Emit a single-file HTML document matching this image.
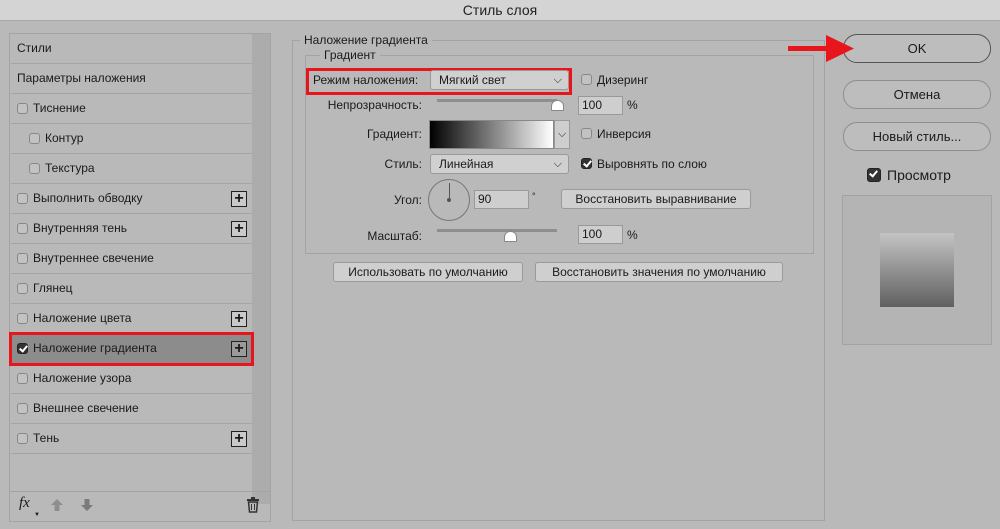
<!DOCTYPE html>
<html><head><meta charset="utf-8"><style>
*{box-sizing:border-box;margin:0;padding:0}
body{width:1000px;height:529px;background:#b9b9b9;font-family:"Liberation Sans",sans-serif;font-size:12px;color:#1a1a1a;position:relative;overflow:hidden}
.a{position:absolute}
.title{left:0;top:0;width:1000px;height:21px;background:#d4d4d4;border-bottom:1px solid #a8a8a8;text-align:center;font-size:14px;line-height:21px;color:#222}
.row{position:absolute;left:11px;width:241px;height:30px;border-bottom:1px solid #a5a5a5;line-height:29px;padding-left:6px;display:flex;align-items:center}
.cb{display:inline-block;flex:none;width:11px;height:11px;border:1px solid #888;border-radius:3px;background:#c2c2c2;margin-right:5px;vertical-align:-1px}
.ck{background:#333;border-color:#222;position:relative}
.ck:after{content:"";position:absolute;left:3px;top:0px;width:3px;height:6px;border:solid #fff;border-width:0 2px 2px 0;transform:rotate(40deg)}
.plus{position:absolute;right:5px;top:7px;width:16px;height:16px;border:1px solid #222;background:#c9c9c9;font-weight:bold;font-size:16px;line-height:13px;text-align:center}
.fld{border:1px solid #a3a3a3}
.inp{background:#cecece;border:1px solid #999;height:19px;line-height:17px;padding-left:3px}
.btn{background:#cfcfcf;border:1px solid #9a9a9a;border-radius:3px;height:20px;line-height:18px;text-align:center}
.rb{border:1px solid #8e8e8e;border-radius:14px;height:29px;line-height:27px;text-align:center;font-size:13px;left:843px;width:148px;background:#bdbdbd}
.sel{background:#d0d0d0;border:1px solid #999;border-radius:3px;height:20px;line-height:18px;padding-left:8px}
.chev{position:absolute;right:6px;top:0;font-size:11px}
.lbl{text-align:right;width:120px;left:302px}
</style></head><body>
<div class="a title">Стиль слоя</div>
<div class="a" style="left:9px;top:33px;width:262px;height:489px;border:1px solid #a3a3a3;background:#b9b9b9"></div>
<div class="a" style="left:252px;top:34px;width:18px;height:470px;background:#acacac"></div>
<div class="row" style="top:34px">Стили</div>
<div class="row" style="top:64px">Параметры наложения</div>
<div class="row" style="top:94px"><span class="cb"></span>Тиснение</div>
<div class="row" style="top:124px;padding-left:18px"><span class="cb"></span>Контур</div>
<div class="row" style="top:154px;padding-left:18px"><span class="cb"></span>Текстура</div>
<div class="row" style="top:184px"><span class="cb"></span>Выполнить обводку<div class="plus">+</div></div>
<div class="row" style="top:214px"><span class="cb"></span>Внутренняя тень<div class="plus">+</div></div>
<div class="row" style="top:244px"><span class="cb"></span>Внутреннее свечение</div>
<div class="row" style="top:274px"><span class="cb"></span>Глянец</div>
<div class="row" style="top:304px"><span class="cb"></span>Наложение цвета<div class="plus">+</div></div>
<div class="row" style="top:334px;background:#8c8c8c"><span class="cb ck"></span>Наложение градиента<div class="plus" style="background:#9a9a9a">+</div></div>
<div class="a" style="left:9px;top:332px;width:245px;height:34px;border:3px solid #e8161c"></div>
<div class="row" style="top:364px"><span class="cb"></span>Наложение узора</div>
<div class="row" style="top:394px"><span class="cb"></span>Внешнее свечение</div>
<div class="row" style="top:424px"><span class="cb"></span>Тень<div class="plus">+</div></div>
<div class="a" style="left:10px;top:491px;width:260px;border-top:1px solid #a3a3a3"></div>
<div class="a" style="left:19px;top:495px;font-size:15px;font-style:italic;font-family:'Liberation Serif',serif">fx</div>
<div class="a" style="left:34px;top:512px;font-size:6px">▼</div>
<svg class="a" style="left:50px;top:498px" width="14" height="14"><polygon points="7,1 13,7 9.5,7 9.5,13 4.5,13 4.5,7 1,7" fill="#8e8e8e"/></svg>
<svg class="a" style="left:80px;top:498px" width="14" height="14"><polygon points="7,13 13,7 9.5,7 9.5,1 4.5,1 4.5,7 1,7" fill="#7a7a7a"/></svg>
<svg class="a" style="left:246px;top:497px" width="14" height="16"><rect x="1" y="2" width="12" height="2" fill="#333"/><rect x="5" y="0" width="4" height="2" fill="#333"/><path d="M2.5 5h9l-1 10h-7z" fill="none" stroke="#333" stroke-width="1.5"/><path d="M5.5 7v6M8.5 7v6" stroke="#333"/></svg>
<div class="a fld" style="left:292px;top:40px;width:533px;height:481px"></div>
<div class="a" style="left:300px;top:33px;background:#b9b9b9;padding:0 4px;font-size:12px">Наложение градиента</div>
<div class="a fld" style="left:305px;top:55px;width:509px;height:199px"></div>
<div class="a" style="left:320px;top:48px;background:#b9b9b9;padding:0 4px">Градиент</div>
<div class="a" style="left:306px;top:68px;width:266px;height:27px;border:3px solid #e8161c"></div>
<div class="a" style="left:313px;top:73px">Режим наложения:</div>
<div class="a sel" style="left:430px;top:70px;width:139px">Мягкий свет<span class="chev">⌵</span></div>
<div class="a" style="left:581px;top:73px"><span class="cb"></span>Дизеринг</div>
<div class="a lbl" style="top:98px">Непрозрачность:</div>
<div class="a" style="left:437px;top:99px;width:120px;height:3px;background:#8e8e8e"></div>
<div class="a" style="left:551px;top:100px;width:13px;height:11px;background:#fff;border-radius:6px 6px 1px 1px;border:1px solid #888"></div>
<div class="a inp" style="left:578px;top:96px;width:45px">100</div>
<div class="a" style="left:627px;top:98px">%</div>
<div class="a lbl" style="top:127px">Градиент:</div>
<div class="a" style="left:429px;top:120px;width:125px;height:29px;border:1px solid #888;background:linear-gradient(90deg,#000,#fff)"></div>
<div class="a" style="left:554px;top:120px;width:16px;height:29px;border:1px solid #999;background:#cecece;font-size:11px;line-height:27px;text-align:center">⌵</div>
<div class="a" style="left:581px;top:127px"><span class="cb"></span>Инверсия</div>
<div class="a lbl" style="top:157px">Стиль:</div>
<div class="a sel" style="left:430px;top:154px;width:139px">Линейная<span class="chev">⌵</span></div>
<div class="a" style="left:581px;top:157px"><span class="cb ck"></span>Выровнять по слою</div>
<div class="a lbl" style="top:193px">Угол:</div>
<div class="a" style="left:428px;top:179px;width:42px;height:42px;border:1px solid #777;border-radius:50%"></div>
<div class="a" style="left:449px;top:183px;width:1px;height:17px;background:#555"></div>
<div class="a" style="left:447px;top:198px;width:4px;height:4px;border-radius:2px;background:#555"></div>
<div class="a inp" style="left:474px;top:190px;width:55px">90</div>
<div class="a" style="left:532px;top:191px;font-size:9px">°</div>
<div class="a btn" style="left:561px;top:189px;width:190px">Восстановить выравнивание</div>
<div class="a lbl" style="top:229px">Масштаб:</div>
<div class="a" style="left:437px;top:229px;width:120px;height:3px;background:#8e8e8e"></div>
<div class="a" style="left:504px;top:231px;width:13px;height:11px;background:#fff;border-radius:6px 6px 1px 1px;border:1px solid #888"></div>
<div class="a inp" style="left:578px;top:225px;width:45px">100</div>
<div class="a" style="left:627px;top:228px">%</div>
<div class="a btn" style="left:333px;top:262px;width:190px">Использовать по умолчанию</div>
<div class="a btn" style="left:535px;top:262px;width:248px">Восстановить значения по умолчанию</div>
<div class="a rb" style="top:34px;border-color:#555">OK</div>
<svg class="a" style="left:786px;top:34px" width="70" height="30"><rect x="2" y="12" width="40" height="5" fill="#e8161c"/><polygon points="40,1 68,14.5 40,28" fill="#e8161c"/></svg>
<div class="a rb" style="top:80px">Отмена</div>
<div class="a rb" style="top:122px">Новый стиль...</div>
<div class="a" style="left:867px;top:167px;font-size:14px;display:flex;align-items:center"><span class="cb ck" style="width:14px;height:14px;margin-right:6px"></span>Просмотр</div>
<div class="a" style="left:842px;top:195px;width:150px;height:150px;border:1px solid #a3a3a3;background:#b4b4b4"></div>
<div class="a" style="left:880px;top:233px;width:74px;height:74px;background:linear-gradient(#c4c4c4,#606060)"></div>
</body></html>
